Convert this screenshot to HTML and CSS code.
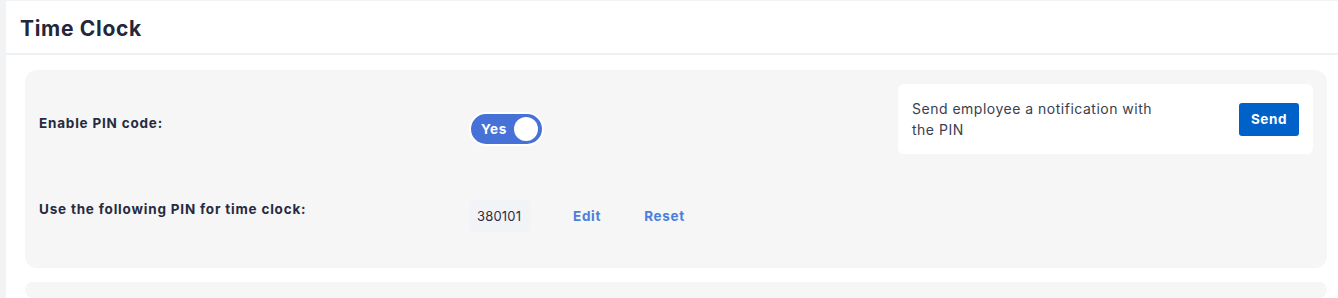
FILE: index.html
```html
<!DOCTYPE html>
<html lang="en">
<head>
<meta charset="utf-8">
<title>Time Clock</title>
<link rel="stylesheet" href="styles.css">
</head>
<body>
<div class="page">
  <header class="header">
    <h1 class="title">Time Clock</h1>
  </header>
  <main class="content">
    <section class="card">
      <div class="settings">
        <div class="label label-first">Enable PIN code:</div>
        <div class="control">
          <button class="toggle" type="button"><span class="toggle-text">Yes</span><span class="knob"></span></button>
        </div>
        <div class="label">Use the following PIN for time clock:</div>
        <div class="control pin-row">
          <span class="pin">380101</span>
          <a class="link" href="#">Edit</a>
          <a class="link" href="#">Reset</a>
        </div>
      </div>
      <div class="notify">
        <p class="notify-text">Send employee a notification with the PIN</p>
        <button class="send" type="button">Send</button>
      </div>
    </section>
    <section class="card card-next"></section>
  </main>
</div>
</body>
</html>
```

FILE: styles.css
```css
* { box-sizing: border-box; }
html, body { margin: 0; padding: 0; }
body {
  background: #f2f3f5;
  font-family: Inter, "Open Sans", Arial, sans-serif;
  color: #262b40;
  height: 298px;
  overflow: hidden;
}
.page {
  margin: 1px 0 0 6px;
  background: #ffffff;
  height: 297px;
  overflow: hidden;
}
.header {
  height: 54px;
  border-bottom: 2px solid #eef0f2;
  padding: 0 14px;
  display: flex;
  align-items: center;
}
.title {
  margin: 2px 0 0 0;
  font-size: 21px;
  font-weight: 700;
  color: #23273b;
  letter-spacing: 0.7px;
}
.content {
  padding: 15px 11px 0 19px;
}
.card {
  background: #f6f6f6;
  border-radius: 12px;
  display: flex;
  align-items: flex-start;
  padding: 14px 14px 36px 14px;
}
.card-next {
  margin-top: 14px;
  height: 16px;
  padding: 0;
}
.settings {
  flex: 1;
  margin-top: 28px;
  display: grid;
  grid-template-columns: 430px auto;
  row-gap: 54px;
  align-items: start;
}
.label {
  font-size: 13.5px;
  font-weight: 700;
  line-height: 18px;
  letter-spacing: 0.8px;
  color: #262b40;
}
.label-first { padding-top: 2px; }
.control {
  display: flex;
  align-items: center;
}
.toggle {
  width: 75px;
  height: 34px;
  border: 2px solid #ffffff;
  border-radius: 17px;
  background: #4672d8;
  display: flex;
  align-items: center;
  justify-content: space-between;
  padding: 0 4px 0 10px;
  cursor: pointer;
  font-family: inherit;
}
.toggle-text {
  color: #ffffff;
  font-size: 13.5px;
  font-weight: 700;
  letter-spacing: 0.6px;
}
.knob {
  width: 24px;
  height: 24px;
  border-radius: 50%;
  background: #ffffff;
}
.pin-row { height: 32px; margin-left: 1px; }
.pin {
  background: #f2f3f7;
  border-radius: 4px;
  height: 32px;
  width: 60px;
  padding: 0 0 0 7px;
  display: flex;
  align-items: center;
  font-size: 13px;
  letter-spacing: 0.2px;
  color: #2a2e3f;
}
.link {
  color: #4b7fdf;
  font-size: 13.5px;
  font-weight: 700;
  letter-spacing: 0.7px;
  text-decoration: none;
  margin-left: 43px;
}
.notify {
  width: 415px;
  height: 70px;
  background: #ffffff;
  border-radius: 6px;
  display: flex;
  align-items: center;
  justify-content: space-between;
  padding: 0 14px;
}
.notify-text {
  margin: 0;
  width: 248px;
  font-size: 14px;
  line-height: 21px;
  letter-spacing: 0.5px;
  color: #3a3e4f;
}
.send {
  width: 60px;
  height: 33px;
  border: none;
  border-radius: 3px;
  background: #0062c9;
  color: #ffffff;
  font-family: inherit;
  font-size: 13.5px;
  font-weight: 700;
  letter-spacing: 0.6px;
  cursor: pointer;
}
```
